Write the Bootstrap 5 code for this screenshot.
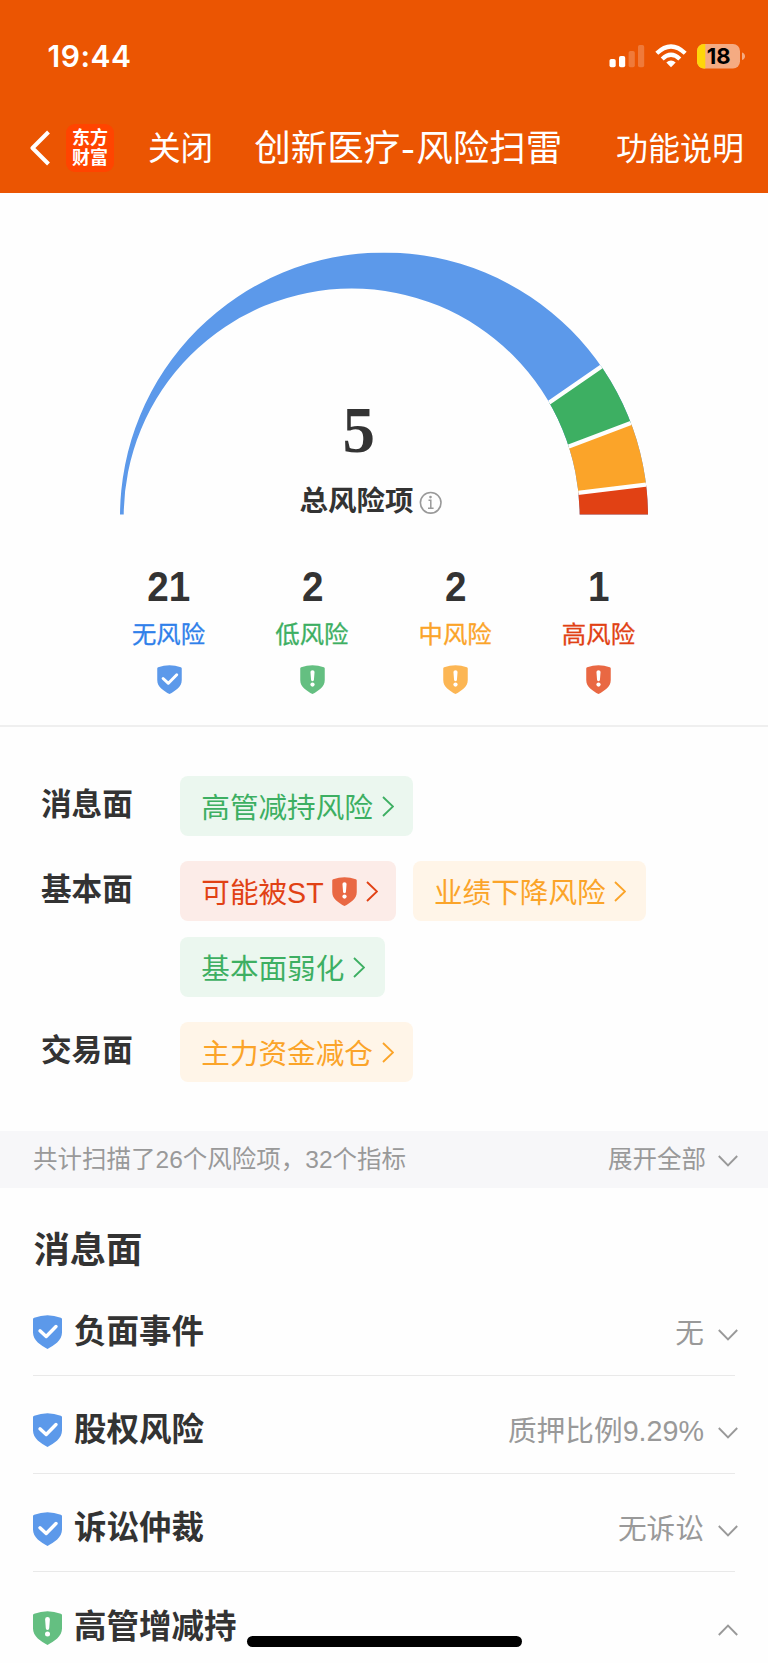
<!DOCTYPE html>
<html lang="zh-CN">
<head>
<meta charset="utf-8">
<meta name="viewport" content="width=device-width, initial-scale=1">
<title>创新医疗-风险扫雷</title>
<link href="https://cdn.jsdelivr.net/npm/bootstrap@5.3.0/dist/css/bootstrap.min.css" rel="stylesheet">
<style>
  :root{--none:#5c99ea;--low:#3daf62;--mid:#fba429;--high:#e14114;--ink:#333;--mute:#999}
  body{font-family:"Liberation Sans","Noto Sans CJK SC",sans-serif;color:var(--ink);background:#fefefe;line-height:1;overflow:hidden}
  .screen{width:768px;height:1663px;overflow:hidden}
  svg{display:block;flex:none}
  .topbar{background:#eb5502;color:#fff;height:192.5px}
  .statusbar{height:112px;padding:0 23px 0 47.5px}
  .clock{font:600 30px Inter,sans-serif;letter-spacing:.5px}
  .navline{height:71px;padding:0 24px 0 30px}
  .brand-tile{width:48px;height:48px;border-radius:9px;background:#ff4400;font-size:18px;line-height:19.5px;font-weight:700;margin-left:16px;padding-top:2px}
  .close-link{font-size:32.6px;margin-left:34px;padding-top:3px}
  .page-name{font-size:36.5px;margin-left:41px;padding-top:4px}
  .page-name .dash{display:inline-block;width:16px;text-align:center;transform:scaleX(1.15)}
  .help-link{font-size:32px;padding-top:3px}
  .counts{width:573.2px;height:202.5px;padding-top:43px}
  .count-num{font-size:42px;font-weight:700;transform:scaleX(.92)}
  .count-label{font-size:24.4px;margin-top:15.5px;-webkit-text-stroke:.3px currentColor;position:relative;left:-.5px}
  .count-icon{margin-top:18px}
  .c-none{color:#2f80ea}.c-low{color:var(--low)}.c-mid{color:var(--mid)}.c-high{color:var(--high)}
  .rule{height:2px;background:#efefef}
  .groups{padding:49px 0 49px 41px;gap:25px}
  .group-name{width:139.3px;font-size:30.6px;font-weight:700;line-height:57px}
  .tags{gap:16px 16.7px;width:500px}
  .tag{height:60px;border-radius:8px;padding:0 19.7px 0 21px;font-size:28.6px}
  .tag span{padding-top:4px}
  .tag svg{margin-left:8.700px}
  .tag svg + svg{margin-left:8.500px}
  .tag-low{background:#ebf7ef;color:var(--low)}
  .tag-mid{background:#fff5e8;color:var(--mid)}
  .tag-high{background:#fcece8;color:var(--high);padding-right:18.500px}
  .summary{height:57px;background:#f7f7f9;color:var(--mute);font-size:24.5px;padding:2px 30px 0 33px}
  .sec-title{font-size:36.3px;font-weight:700;padding:41px 0 0 33.5px;height:89.5px}
  .item{height:98.3px;margin:0 33px;border-bottom:1.5px solid #e9e9e9;padding-top:12px}
  .item-name{font-size:32.5px;font-weight:700;margin-left:12px}
  .item-val{font-size:28.7px;color:var(--mute);margin-right:-3px;padding-top:2px;gap:14px}
  .item-val svg{margin-top:3px}
  .home-pill{position:absolute;left:247px;top:1636px;width:275px;height:10.5px;border-radius:6px;background:#000}
</style>
</head>
<body>
<svg width="0" height="0" class="position-absolute">
  <symbol id="shield" viewBox="0 0 29 34"><path d="M0 4.200Q0 3 1.200 2.700Q14.500-2.300 27.800 2.700Q29 3 29 4.200V17.500C29 25.500 21 30.500 14.500 34C8 30.500 0 25.500 0 17.500Z" fill="currentColor"/></symbol>
  <symbol id="ok" viewBox="0 0 29 34"><use href="#shield"/><path d="M7 15.800L13.200 21.500L23 11.500" fill="none" stroke="#fff" stroke-width="3.400" stroke-linecap="round" stroke-linejoin="round"/></symbol>
  <symbol id="warn" viewBox="0 0 29 34"><use href="#shield"/><path d="M12.100 8.300a2.400 2.200 0 0 1 4.800 0l-.7 9a1.700 1.700 0 0 1-3.400 0z" fill="#fff"/><circle cx="14.500" cy="23" r="2.500" fill="#fff"/></symbol>
  <symbol id="right" viewBox="0 0 12 21"><path d="M1 1L11 10.500L1 20" fill="none" stroke="currentColor" stroke-width="1.900"/></symbol>
  <symbol id="down" viewBox="0 0 20 12"><path d="M.8 1L10 10.500L19.200 1" fill="none" stroke="currentColor" stroke-width="1.900"/></symbol>
  <symbol id="up" viewBox="0 0 20 12"><path d="M.8 11L10 1.500L19.200 11" fill="none" stroke="currentColor" stroke-width="1.900"/></symbol>
</svg>
<main class="screen position-relative">
  <header class="topbar">
    <div class="statusbar d-flex align-items-center justify-content-between">
      <span class="clock">19:44</span>
      <svg width="136" height="26" viewBox="609 43 136 26" fill="#fff">
        <rect x="609.500" y="59" width="6.200" height="8.200" rx="1.800"/><rect x="619" y="56" width="6.200" height="11.200" rx="1.800"/>
        <g opacity=".22"><rect x="628.600" y="51" width="6.200" height="16.200" rx="1.800"/><rect x="638" y="45" width="6.200" height="22.200" rx="1.800"/></g>
        <g fill="none" stroke="#fff" stroke-width="4.300"><path d="M656.800 53.200Q671 39.700 685.200 53.200"/><path d="M662.200 59Q671 50.700 679.800 59"/></g>
        <path d="M666.300 62.500Q671 58.300 675.700 62.500L671 67.300Z"/>
        <clipPath id="cell"><rect x="697" y="44" width="43" height="24.500" rx="7"/></clipPath>
        <g clip-path="url(#cell)"><rect x="697" y="44" width="43" height="25" fill="#f5ab82"/><rect x="697" y="44" width="8.300" height="25" fill="#ffd60a"/></g>
        <path d="M742 52.500Q745 53.500 745 56.300T742 60Z" fill="#f5ab82"/>
        <text x="718.700" y="64" text-anchor="middle" font-family="Inter,sans-serif" font-weight="700" font-size="22" fill="#000">18</text>
      </svg>
    </div>
    <nav class="navline d-flex align-items-center">
      <svg width="20" height="36" viewBox="0 0 20 36"><path d="M18.500 2L2.500 18L18.500 34" fill="none" stroke="#fff" stroke-width="4" stroke-linejoin="round"/></svg>
      <div class="brand-tile d-flex flex-column align-items-center justify-content-center"><span>东方</span><span>财富</span></div>
      <span class="close-link">关闭</span>
      <span class="page-name">创新医疗<span class="dash">-</span>风险扫雷</span>
      <span class="help-link ms-auto">功能说明</span>
    </nav>
  </header>

  <svg width="768" height="330" viewBox="0 192.500 768 330">
    <clipPath id="crescent"><path d="M120 516A264 264 0 0 1 648 516H579.700A228 228 0 0 0 123.700 516Z"/></clipPath>
    <g clip-path="url(#crescent)">
      <path d="M110 240H658V514H110Z" fill="#5c99ea"/>
      <path d="M384 516L713.200 288.900L758 374.200Z" fill="#3daf62"/>
      <path d="M384 516L758 374.200L781.100 467.800Z" fill="#fba429"/>
      <path d="M384 514V516L781.100 467.800V514Z" fill="#e14114"/>
      <path d="M384 516L713.200 288.900M384 516L758 374.200M384 516L781.100 467.800" stroke="#fefefe" stroke-width="4.200"/>
    </g>
    <text x="358.700" y="451" text-anchor="middle" font-family="Liberation Serif,serif" font-weight="700" font-size="65" fill="#333">5</text>
    <text x="299.500" y="510.500" font-weight="700" font-size="28.500" fill="#333">总风险项</text>
    <circle cx="430.700" cy="502.300" r="10.300" fill="none" stroke="#999" stroke-width="1.600"/>
    <path d="M428.500 499.800H430.800V507.500M428 507.700H433.600" fill="none" stroke="#999" stroke-width="1.500"/><circle cx="430.500" cy="496.600" r="1.300" fill="#999"/>
  </svg>

  <section class="counts d-flex mx-auto text-center">
    <div class="col-3"><div class="count-num">21</div><div class="count-label c-none">无风险</div><svg class="count-icon mx-auto" width="25" height="29" style="color:#5c99ea"><use href="#ok"/></svg></div>
    <div class="col-3"><div class="count-num">2</div><div class="count-label c-low">低风险</div><svg class="count-icon mx-auto" width="25" height="29" style="color:#64bf81"><use href="#warn"/></svg></div>
    <div class="col-3"><div class="count-num">2</div><div class="count-label c-mid">中风险</div><svg class="count-icon mx-auto" width="25" height="29" style="color:#fcb654"><use href="#warn"/></svg></div>
    <div class="col-3"><div class="count-num">1</div><div class="count-label c-high">高风险</div><svg class="count-icon mx-auto" width="25" height="29" style="color:#e96843"><use href="#warn"/></svg></div>
  </section>
  <div class="rule"></div>

  <section class="groups d-flex flex-column">
    <div class="d-flex"><div class="group-name">消息面</div><div class="tags d-flex flex-wrap">
      <a class="tag tag-low d-flex align-items-center text-decoration-none"><span>高管减持风险</span><svg width="12" height="21"><use href="#right"/></svg></a></div></div>
    <div class="d-flex"><div class="group-name">基本面</div><div class="tags d-flex flex-wrap">
      <a class="tag tag-high d-flex align-items-center text-decoration-none"><span>可能被ST</span><svg width="25" height="29" style="color:#e96843"><use href="#warn"/></svg><svg width="12" height="21"><use href="#right"/></svg></a>
      <a class="tag tag-mid d-flex align-items-center text-decoration-none"><span>业绩下降风险</span><svg width="12" height="21"><use href="#right"/></svg></a>
      <a class="tag tag-low d-flex align-items-center text-decoration-none"><span>基本面弱化</span><svg width="12" height="21"><use href="#right"/></svg></a></div></div>
    <div class="d-flex"><div class="group-name">交易面</div><div class="tags d-flex flex-wrap">
      <a class="tag tag-mid d-flex align-items-center text-decoration-none"><span>主力资金减仓</span><svg width="12" height="21"><use href="#right"/></svg></a></div></div>
  </section>

  <div class="summary d-flex align-items-center justify-content-between">
    <span>共计扫描了26个风险项，32个指标</span>
    <span class="d-flex align-items-center gap-2">展开全部<svg class="ms-1" width="20" height="12"><use href="#down"/></svg></span>
  </div>

  <h2 class="sec-title m-0">消息面</h2>
  <div class="item d-flex align-items-center"><svg width="29" height="34" style="color:#5c99ea"><use href="#ok"/></svg><span class="item-name">负面事件</span>
    <span class="item-val ms-auto d-flex align-items-center">无<svg width="20" height="12"><use href="#down"/></svg></span></div>
  <div class="item d-flex align-items-center"><svg width="29" height="34" style="color:#5c99ea"><use href="#ok"/></svg><span class="item-name">股权风险</span>
    <span class="item-val ms-auto d-flex align-items-center">质押比例9.29%<svg width="20" height="12"><use href="#down"/></svg></span></div>
  <div class="item d-flex align-items-center"><svg width="29" height="34" style="color:#5c99ea"><use href="#ok"/></svg><span class="item-name">诉讼仲裁</span>
    <span class="item-val ms-auto d-flex align-items-center">无诉讼<svg width="20" height="12"><use href="#down"/></svg></span></div>
  <div class="item d-flex align-items-center border-0"><svg width="29" height="34" style="color:#64bf81"><use href="#warn"/></svg><span class="item-name">高管增减持</span>
    <span class="item-val ms-auto d-flex align-items-center"><svg width="20" height="12"><use href="#up"/></svg></span></div>
  <div class="home-pill"></div>
</main>
<script src="https://cdn.jsdelivr.net/npm/bootstrap@5.3.0/dist/js/bootstrap.bundle.min.js"></script>
</body>
</html>
